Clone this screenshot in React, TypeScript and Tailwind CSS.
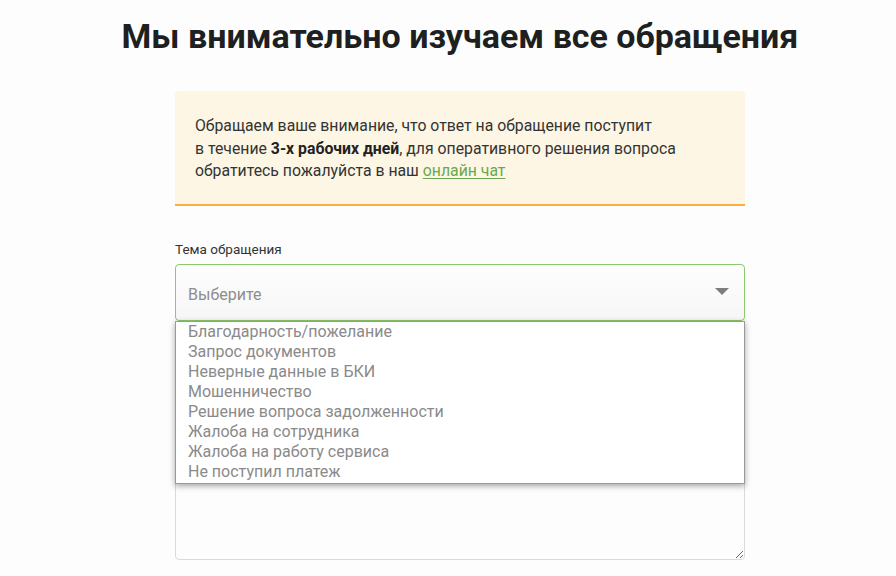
import React from "react";

const options = [
  "Благодарность/пожелание",
  "Запрос документов",
  "Неверные данные в БКИ",
  "Мошенничество",
  "Решение вопроса задолженности",
  "Жалоба на сотрудника",
  "Жалоба на работу сервиса",
  "Не поступил платеж",
];

export default function App() {
  return (
    <div
      className="w-[896px] h-[576px] overflow-hidden bg-[#fdfdfd] text-[#222]"
      style={{ fontFamily: "Roboto, 'Noto Sans', sans-serif" }}
    >
      <div className="ml-[175px] w-[570px] flex flex-col">
        <h1 className="mt-[13px] -mx-[80px] text-center text-[34px] leading-[46px] font-bold text-[#1d1f21]">
          Мы внимательно изучаем все обращения
        </h1>
        <div className="mt-[32px] bg-[#fdf6e4] border-b-2 border-[#fbb040] rounded-t-[3px] px-[20px] pt-[24px] pb-[21px] text-[15.8px] leading-[22.5px] text-[#333]">
          Обращаем ваше внимание, что ответ на обращение поступит
          <br />
          в течение <b className="font-bold text-[#222]">3-х рабочих дней</b>, для оперативного решения вопроса
          <br />
          обратитесь пожалуйста в наш{" "}
          <a className="text-[#6aa84f] underline underline-offset-2">онлайн чат</a>
        </div>
        <label className="mt-[34px] text-[13.5px] leading-[18px] text-[#333]">Тема обращения</label>
        <div className="relative mt-[6px]">
          <div className="h-[57px] border border-[#8bc96a] rounded-[4px] bg-gradient-to-b from-[#fefefe] to-[#f6f6f6] flex items-center justify-between pl-[12px] pr-[15px]">
            <span className="pt-[5px] text-[16px] text-[#8d8d8d]">Выберите</span>
            <svg width="14" height="8" viewBox="0 0 14 8">
              <path d="M0 0 L14 0 L7 7 Z" fill="#7d7d7d" />
            </svg>
          </div>
          <div className="absolute left-0 right-0 top-[57px] z-10 bg-white border border-[#9a9a9a] shadow-[0_2px_6px_rgba(0,0,0,0.35)] pt-0 pb-[1px]">
            {options.map((o) => (
              <div key={o} className="pl-[12px] text-[16px] leading-[20px] text-[#8a8a8a]">
                {o}
              </div>
            ))}
          </div>
          <textarea className="mt-[21px] w-full h-[218px] block border border-[#d6dbe0] rounded-[4px] bg-[#fdfdfd] outline-none resize" />
        </div>
      </div>
    </div>
  );
}
